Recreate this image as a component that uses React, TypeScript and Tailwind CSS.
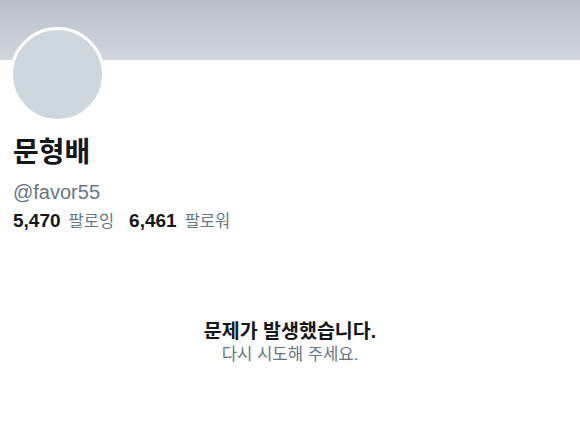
const FONT = "font-['Liberation_Sans','Noto_Sans_CJK_KR',sans-serif]";

export default function App() {
  return (
    <div className={`w-[580px] h-[447px] bg-white overflow-hidden ${FONT}`}>
      {/* Banner */}
      <div className="h-[60px] bg-gradient-to-b from-[#b9c0c8] to-[#d1d7dd]" />

      {/* Profile */}
      <div className="px-[10px]">
        <div className="-mt-[33px] w-[95px] h-[95px] rounded-full border-[3px] border-white bg-[#cfd7de]" />
      </div>
      <div className="px-[13px] pt-[15px]">
        <h1 className="text-[28px] leading-[32px] font-bold text-[#14171a]">문형배</h1>
        <p className="mt-[12px] text-[20px] leading-[22px] text-[#657786]">@favor55</p>
        <div className="mt-[8px] flex items-baseline gap-[15px] text-[16.5px] leading-[20px]">
          <span>
            <span className="text-[19px] font-bold text-[#14171a]">5,470</span>
            <span className="ml-[8px] text-[#657786]">팔로잉</span>
          </span>
          <span>
            <span className="text-[19px] font-bold text-[#14171a]">6,461</span>
            <span className="ml-[8px] text-[#657786]">팔로워</span>
          </span>
        </div>
      </div>

      {/* Error */}
      <div className="mt-[88px] flex flex-col items-center">
        <p className="text-[19.5px] leading-[24px] font-bold text-[#14171a]">문제가 발생했습니다.</p>
        <p className="mt-[1px] text-[16.7px] leading-[22px] text-[#657786]">다시 시도해 주세요.</p>
      </div>
    </div>
  );
}
